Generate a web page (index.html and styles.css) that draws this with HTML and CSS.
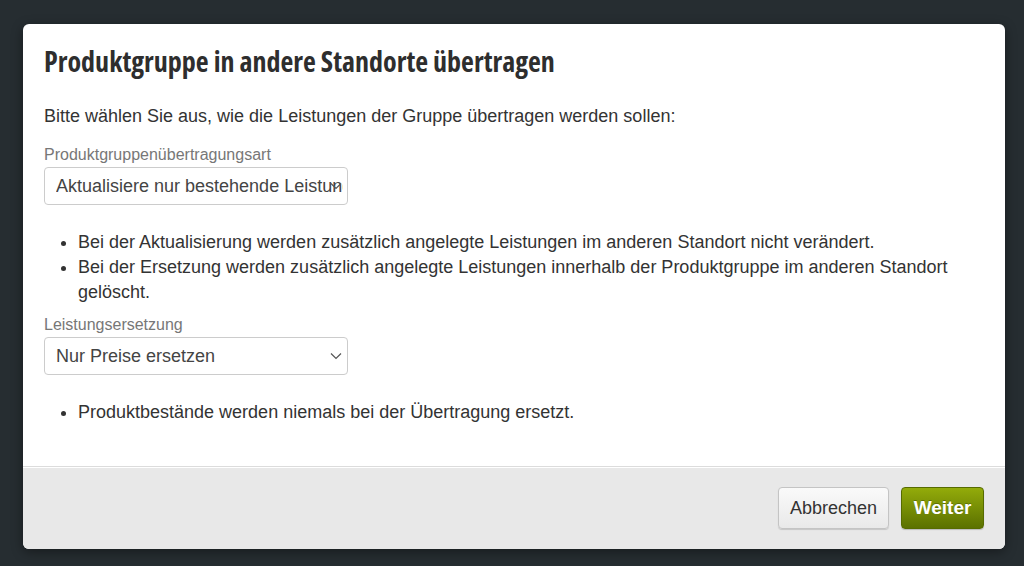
FILE: index.html
```html
<!DOCTYPE html>
<html lang="de">
<head>
    <meta charset="UTF-8">
    <meta name="viewport" content="width=device-width, initial-scale=1.0">
    <title>Produktgruppe übertragen</title>
    <link rel="stylesheet" href="styles.css">
</head>
<body>
    <div class="modal">
        <div class="modal-body">
            <h2 class="modal-title">Produktgruppe in andere Standorte übertragen</h2>

            <p class="intro">Bitte wählen Sie aus, wie die Leistungen der Gruppe übertragen werden sollen:</p>

            <label class="field-label" for="transferType">Produktgruppenübertragungsart</label>
            <div class="select-wrap">
                <select id="transferType" class="select select-clipped">
                    <option>Aktualisiere nur bestehende Leistungen</option>
                    <option>Ersetze alle Leistungen</option>
                </select>
                <svg class="chevron" width="12" height="8" viewBox="0 0 12 8"><path d="M1 1.5l5 5 5-5" fill="none" stroke="#555" stroke-width="1.2"/></svg>
            </div>

            <ul class="notes">
                <li>Bei der Aktualisierung werden zusätzlich angelegte Leistungen im anderen Standort nicht verändert.</li>
                <li>Bei der Ersetzung werden zusätzlich angelegte Leistungen innerhalb der Produktgruppe im anderen Standort gelöscht.</li>
            </ul>

            <label class="field-label field-label-tight" for="replaceType">Leistungsersetzung</label>
            <div class="select-wrap">
                <select id="replaceType" class="select">
                    <option>Nur Preise ersetzen</option>
                    <option>Alles ersetzen</option>
                </select>
                <svg class="chevron" width="12" height="8" viewBox="0 0 12 8"><path d="M1 1.5l5 5 5-5" fill="none" stroke="#555" stroke-width="1.2"/></svg>
            </div>

            <ul class="notes">
                <li>Produktbestände werden niemals bei der Übertragung ersetzt.</li>
            </ul>
        </div>

        <div class="modal-footer">
            <button class="btn btn-cancel">Abbrechen</button>
            <button class="btn btn-primary">Weiter</button>
        </div>
    </div>
</body>
</html>
```

FILE: styles.css
```css
* {
    margin: 0;
    padding: 0;
    box-sizing: border-box;
}

body {
    background: #262d31;
    font-family: 'Liberation Sans', Arial, sans-serif;
    color: #333;
    padding: 24px 0 0 23px;
    height: 100vh;
    overflow: hidden;
}

.modal {
    width: 982px;
    background: #fff;
    border-radius: 6px;
    overflow: hidden;
    box-shadow: 0 3px 12px rgba(0,0,0,0.4);
}

.modal-body {
    padding: 21px 21px 41px 21px;
}

.modal-title {
    font-family: 'Open Sans', 'DejaVu Sans Condensed', sans-serif;
    font-stretch: 75%;
    font-weight: 700;
    font-size: 28px;
    line-height: 33px;
    color: #2e2e2e;
}

.intro {
    margin-top: 27px;
    font-size: 18px;
    line-height: 22px;
}

.field-label {
    display: block;
    margin-top: 18px;
    font-size: 16px;
    line-height: 20px;
    color: #777;
}

.field-label-tight {
    margin-top: 10px;
}

.select-wrap {
    position: relative;
    width: 304px;
    margin-top: 2px;
}

.select {
    appearance: none;
    -webkit-appearance: none;
    width: 100%;
    height: 38px;
    padding: 0 0 0 11px;
    border: 1px solid #ccc;
    border-radius: 4px;
    background: #fff;
    font-family: 'Liberation Sans', Arial, sans-serif;
    font-size: 18px;
    color: #444;
}

.select-clipped {
    padding-right: 4px;
}

.chevron {
    position: absolute;
    right: 6px;
    top: 15px;
    pointer-events: none;
}

.notes {
    margin-top: 25px;
    padding-left: 34px;
    font-size: 18px;
    line-height: 25px;
}

.modal-footer {
    background: #e8e8e8;
    border-top: 1px solid #dcdcdc;
    box-shadow: inset 0 1px 0 #fff;
    height: 83px;
    padding: 20px 21px 0 0;
    display: flex;
    justify-content: flex-end;
    align-items: flex-start;
    gap: 12px;
}

.btn {
    height: 42px;
    border-radius: 4px;
    font-family: 'Liberation Sans', Arial, sans-serif;
    cursor: pointer;
}

.btn-cancel {
    width: 111px;
    background: linear-gradient(#fafafa, #e9e9e9);
    border: 1px solid #c4c4c4;
    box-shadow: 0 1px 1px rgba(0,0,0,0.15);
    color: #333;
    font-size: 18px;
}

.btn-primary {
    width: 83px;
    background: linear-gradient(#93ab0a, #5b7100);
    border: 1px solid #566b00;
    box-shadow: 0 1px 1px rgba(0,0,0,0.2);
    color: #fff;
    font-weight: 700;
    font-size: 19px;
    text-shadow: 0 -1px 0 rgba(0,0,0,0.25);
}
```
